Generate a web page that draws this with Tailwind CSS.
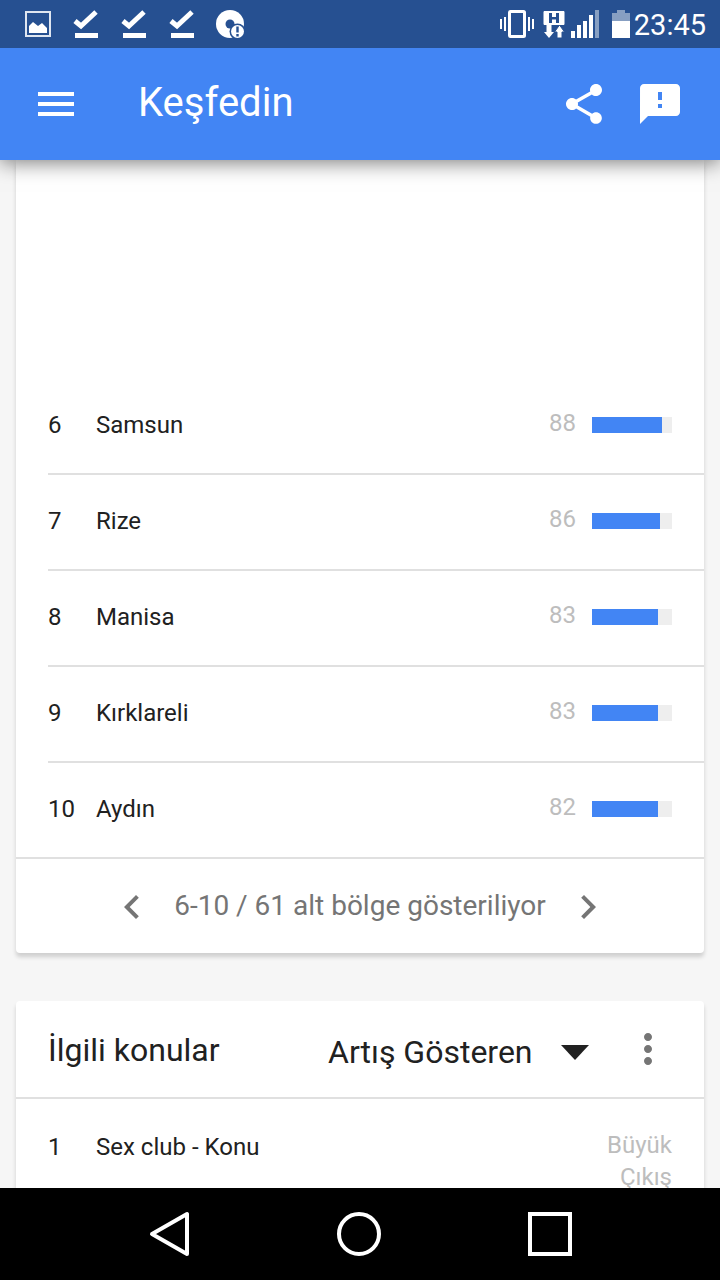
<!DOCTYPE html>
<html lang="tr">
<head>
    <meta charset="UTF-8">
    <meta name="viewport" content="width=device-width, initial-scale=1.0">
    <title>Keşfedin</title>
    <script src="https://cdn.jsdelivr.net/npm/@tailwindcss/browser@4"></script>
</head>
<body class="h-screen flex flex-col overflow-hidden bg-[#f6f6f6] text-[#212121] font-[Roboto,sans-serif]">
    <!-- Status bar -->
    <div class="relative z-20 h-12 shrink-0 flex items-center justify-between pl-6 pr-[14px] bg-[#265091] text-white">
        <div class="flex items-center gap-5">
            <svg class="w-7 h-7" viewBox="0 0 28 28" fill="none">
                <rect x="2" y="2" width="24" height="24" stroke="#dfe6f1" stroke-width="2"/>
                <path d="M5 23v-7l4-4 5 4 4-3 5 5v5z" fill="#fff"/>
            </svg>
            <svg class="w-7 h-7" viewBox="0 0 28 28" fill="none" stroke="#fff">
                <path d="M3 11l6 5L24 2" stroke-width="5"/>
                <path d="M3 25.500h23" stroke-width="5"/>
            </svg>
            <svg class="w-7 h-7" viewBox="0 0 28 28" fill="none" stroke="#fff">
                <path d="M3 11l6 5L24 2" stroke-width="5"/>
                <path d="M3 25.500h23" stroke-width="5"/>
            </svg>
            <svg class="w-7 h-7" viewBox="0 0 28 28" fill="none" stroke="#fff">
                <path d="M3 11l6 5L24 2" stroke-width="5"/>
                <path d="M3 25.500h23" stroke-width="5"/>
            </svg>
            <svg class="w-7 h-7" viewBox="0 0 28 28">
                <circle cx="14" cy="14" r="14" fill="#fff"/>
                <circle cx="14" cy="14" r="4.500" fill="#265091"/>
                <circle cx="21.500" cy="21.500" r="8" fill="#265091"/>
                <circle cx="21.500" cy="21.500" r="6.500" fill="#fff"/>
                <path d="M20.300 16.500h2.400v6h-2.400zM20.300 24h2.400v2.400h-2.400z" fill="#265091"/>
            </svg>
        </div>
        <div class="flex items-center">
            <svg class="w-[34px] h-7" viewBox="0 0 34 28" fill="#fff">
                <path d="M0 9h2v10H0zM4 7h2v14H4zM28 7h2v14h-2zM32 9h2v10h-2z"/>
                <rect x="9.500" y="1.500" width="15" height="25" rx="1" fill="none" stroke="#fff" stroke-width="3"/>
            </svg>
            <svg class="w-[22px] h-7 ml-[9px]" viewBox="0 0 22 28" fill="#fff">
                <path d="M1 1.500h20v13H1z" stroke="#fff" stroke-linejoin="round"/>
                <path d="M6 3h3v4h4V3h3v10h-3V9.500H9V13H6z" fill="#265091"/>
                <path d="M3.500 14h5v8H11l-5 6-5-6h2.500z"/>
                <path d="M16.500 15l5 7H19v6h-5v-6h-2.500z" stroke="#265091" stroke-width="1"/>
            </svg>
            <svg class="w-7 h-7 ml-[6px]" viewBox="0 0 28 28" fill="#fff">
                <path d="M0 21h4v7H0zM6 15h4v13H6zM12 11h4v17h-4zM18 5h4v23h-4z"/>
                <path d="M24 0h4v28h-4z" opacity=".45"/>
            </svg>
            <svg class="w-[18px] h-7 ml-[13px]" viewBox="0 0 18 28" fill="#fff">
                <path d="M5 0h8v3h5v8H0V3h5z" opacity=".45"/>
                <path d="M0 11h18v17H0z"/>
            </svg>
            <span class="ml-1 pt-0.5 text-[29px] leading-8">23:45</span>
        </div>
    </div>

    <!-- App bar -->
    <header class="relative z-10 h-28 shrink-0 flex items-center pl-8 pr-9 bg-[#4285f4] text-white shadow-[0_2px_20px_rgba(0,0,0,0.55)]">
        <button aria-label="Menü">
            <svg class="w-12 h-12" viewBox="0 0 24 24" fill="currentColor"><path d="M3 18h18v-2H3v2zm0-5h18v-2H3v2zm0-7v2h18V6H3z"/></svg>
        </button>
        <h1 class="ml-[58px] pb-0.5 text-[40px] leading-12">Keşfedin</h1>
        <div class="ml-auto flex gap-7">
            <button aria-label="Paylaş">
                <svg class="w-12 h-12" viewBox="0 0 24 24" fill="currentColor"><path d="M18 16.080c-.76 0-1.440.3-1.960.77L8.910 12.700c.05-.23.09-.46.09-.7s-.04-.47-.09-.7l7.050-4.110c.54.5 1.250.81 2.040.81 1.660 0 3-1.340 3-3s-1.340-3-3-3-3 1.340-3 3c0 .24.04.47.09.7L8.040 9.810C7.500 9.310 6.790 9 6 9c-1.660 0-3 1.340-3 3s1.340 3 3 3c.79 0 1.500-.31 2.040-.81l7.120 4.160c-.05.21-.08.43-.08.65 0 1.610 1.310 2.920 2.920 2.920s2.920-1.310 2.920-2.920-1.310-2.920-2.920-2.920z"/></svg>
            </button>
            <button aria-label="Geri bildirim gönder">
                <svg class="w-12 h-12" viewBox="0 0 24 24" fill="currentColor"><path d="M20 2H4c-1.100 0-1.990.9-1.990 2L2 22l4-4h14c1.100 0 2-.9 2-2V4c0-1.100-.9-2-2-2zm-7 12h-2v-2h2v2zm0-4h-2V6h2v4z"/></svg>
            </button>
        </div>
    </header>

    <main class="flex-1 min-h-0 overflow-hidden px-4">
        <!-- Subregions -->
        <section class="pt-[219px] bg-white rounded-b-sm shadow-[0_4px_4px_rgba(0,0,0,0.16)]">
            <ol class="pl-8">
                <li class="h-24 flex items-center pr-8 pb-0.5 border-b-2 border-[#e0e0e0] text-2xl">
                    <span class="w-12">6</span>
                    <span>Samsun</span>
                    <span class="ml-auto mr-4 pb-1 text-[#bdbdbd]">88</span>
                    <div class="w-20 h-4 bg-[#eeeeee]"><div class="h-4 bg-[#4285f4]" style="width: 70px"></div></div>
                </li>
                <li class="h-24 flex items-center pr-8 pb-0.5 border-b-2 border-[#e0e0e0] text-2xl">
                    <span class="w-12">7</span>
                    <span>Rize</span>
                    <span class="ml-auto mr-4 pb-1 text-[#bdbdbd]">86</span>
                    <div class="w-20 h-4 bg-[#eeeeee]"><div class="h-4 bg-[#4285f4]" style="width: 68px"></div></div>
                </li>
                <li class="h-24 flex items-center pr-8 pb-0.5 border-b-2 border-[#e0e0e0] text-2xl">
                    <span class="w-12">8</span>
                    <span>Manisa</span>
                    <span class="ml-auto mr-4 pb-1 text-[#bdbdbd]">83</span>
                    <div class="w-20 h-4 bg-[#eeeeee]"><div class="h-4 bg-[#4285f4]" style="width: 66px"></div></div>
                </li>
                <li class="h-24 flex items-center pr-8 pb-0.5 border-b-2 border-[#e0e0e0] text-2xl">
                    <span class="w-12">9</span>
                    <span>Kırklareli</span>
                    <span class="ml-auto mr-4 pb-1 text-[#bdbdbd]">83</span>
                    <div class="w-20 h-4 bg-[#eeeeee]"><div class="h-4 bg-[#4285f4]" style="width: 66px"></div></div>
                </li>
                <li class="h-[94px] flex items-center pr-8 pb-0.5 text-2xl">
                    <span class="w-12">10</span>
                    <span>Aydın</span>
                    <span class="ml-auto mr-4 pb-1 text-[#bdbdbd]">82</span>
                    <div class="w-20 h-4 bg-[#eeeeee]"><div class="h-4 bg-[#4285f4]" style="width: 66px"></div></div>
                </li>
            </ol>
            <div class="h-24 flex items-center justify-center gap-[18px] pt-0.5 border-t-2 border-[#e0e0e0] text-[#757575]">
                <button aria-label="Önceki">
                    <svg class="w-12 h-12" viewBox="0 0 24 24" fill="currentColor"><path d="M15.410 7.410L14 6l-6 6 6 6 1.410-1.410L10.830 12z"/></svg>
                </button>
                <span class="pb-0.5 text-[28px] leading-8">6-10 / 61 alt bölge gösteriliyor</span>
                <button aria-label="Sonraki">
                    <svg class="w-12 h-12" viewBox="0 0 24 24" fill="currentColor"><path d="M10 6L8.590 7.410 13.170 12l-4.580 4.590L10 18l6-6z"/></svg>
                </button>
            </div>
        </section>

        <!-- Related topics -->
        <section class="mt-12 bg-white rounded-sm shadow-[0_4px_4px_rgba(0,0,0,0.16)]">
            <div class="h-[98px] flex items-center px-8 border-b-2 border-[#e0e0e0]">
                <h2 class="pt-0.5 text-[32px] leading-10">İlgili konular</h2>
                <div class="relative ml-auto mr-[35px] pt-1.5">
                    <select aria-label="Sıralama" class="block appearance-none w-[261px] text-[32px] leading-10 bg-transparent">
                        <option>Artış Gösteren</option>
                    </select>
                    <svg class="absolute right-0 top-[19px] w-7 h-4 pointer-events-none" viewBox="0 0 28 16" fill="currentColor"><path d="M0 0h28L14 15z"/></svg>
                </div>
                <button aria-label="Diğer" class="text-[#757575]">
                    <svg class="w-12 h-12" viewBox="0 0 24 24" fill="currentColor"><path d="M12 8c1.100 0 2-.9 2-2s-.9-2-2-2-2 .9-2 2 .9 2 2 2zm0 2c-1.100 0-2 .9-2 2s.9 2 2 2 2-.9 2-2-.9-2-2-2zm0 6c-1.100 0-2 .9-2 2s.9 2 2 2 2-.9 2-2-.9-2-2-2z"/></svg>
                </button>
            </div>
            <ol class="pl-8">
                <li class="flex items-start py-[30px] pr-8 text-2xl">
                    <span class="w-12 pt-0.5">1</span>
                    <span class="pt-0.5">Sex club - Konu</span>
                    <span class="ml-auto w-20 text-right text-[#bdbdbd]">Büyük Çıkış</span>
                </li>
            </ol>
        </section>
    </main>

    <!-- Navigation bar -->
    <nav class="relative z-10 h-[92px] shrink-0 flex items-center justify-center gap-[143px] pr-0.5 bg-black text-white">
        <button aria-label="Geri">
            <svg class="w-12 h-12" viewBox="0 0 48 48" fill="none" stroke="currentColor" stroke-width="4" stroke-linejoin="round"><path d="M43 4v40L8 24z"/></svg>
        </button>
        <button aria-label="Ana ekran">
            <svg class="w-12 h-12" viewBox="0 0 48 48" fill="none" stroke="currentColor" stroke-width="4"><circle cx="24" cy="24" r="20"/></svg>
        </button>
        <button aria-label="Son uygulamalar">
            <svg class="w-12 h-12" viewBox="0 0 48 48" fill="none" stroke="currentColor" stroke-width="4"><path d="M4 4h40v40H4z"/></svg>
        </button>
    </nav>
</body>
</html>
